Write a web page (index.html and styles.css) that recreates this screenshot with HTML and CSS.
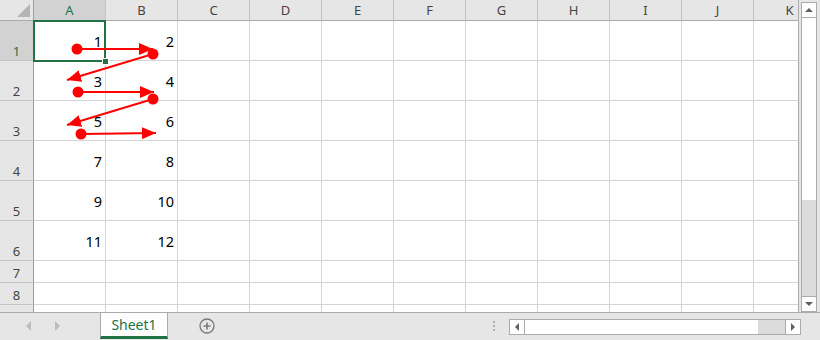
FILE: index.html
```html
<!DOCTYPE html>
<html lang="en">
<head>
    <meta charset="UTF-8">
    <title>Book1 - Sheet1</title>
    <link rel="stylesheet" href="styles.css">
</head>
<body>
    <div class="app">
        <div class="main">
            <div class="sheet">
                <div class="grid">
                    <div class="corner"><span class="tri"></span></div>
                    <div class="col-head sel">A</div><div class="col-head">B</div><div class="col-head">C</div><div class="col-head">D</div><div class="col-head">E</div><div class="col-head">F</div><div class="col-head">G</div><div class="col-head">H</div><div class="col-head">I</div><div class="col-head">J</div><div class="col-head">K</div>

                    <div class="row-head sel">1</div><div class="cell">1</div><div class="cell">2</div><div class="cell"></div><div class="cell"></div><div class="cell"></div><div class="cell"></div><div class="cell"></div><div class="cell"></div><div class="cell"></div><div class="cell"></div><div class="cell"></div>
                    <div class="row-head">2</div><div class="cell">3</div><div class="cell">4</div><div class="cell"></div><div class="cell"></div><div class="cell"></div><div class="cell"></div><div class="cell"></div><div class="cell"></div><div class="cell"></div><div class="cell"></div><div class="cell"></div>
                    <div class="row-head">3</div><div class="cell">5</div><div class="cell">6</div><div class="cell"></div><div class="cell"></div><div class="cell"></div><div class="cell"></div><div class="cell"></div><div class="cell"></div><div class="cell"></div><div class="cell"></div><div class="cell"></div>
                    <div class="row-head">4</div><div class="cell">7</div><div class="cell">8</div><div class="cell"></div><div class="cell"></div><div class="cell"></div><div class="cell"></div><div class="cell"></div><div class="cell"></div><div class="cell"></div><div class="cell"></div><div class="cell"></div>
                    <div class="row-head">5</div><div class="cell">9</div><div class="cell">10</div><div class="cell"></div><div class="cell"></div><div class="cell"></div><div class="cell"></div><div class="cell"></div><div class="cell"></div><div class="cell"></div><div class="cell"></div><div class="cell"></div>
                    <div class="row-head">6</div><div class="cell">11</div><div class="cell">12</div><div class="cell"></div><div class="cell"></div><div class="cell"></div><div class="cell"></div><div class="cell"></div><div class="cell"></div><div class="cell"></div><div class="cell"></div><div class="cell"></div>
                    <div class="row-head">7</div><div class="cell"></div><div class="cell"></div><div class="cell"></div><div class="cell"></div><div class="cell"></div><div class="cell"></div><div class="cell"></div><div class="cell"></div><div class="cell"></div><div class="cell"></div><div class="cell"></div>
                    <div class="row-head">8</div><div class="cell"></div><div class="cell"></div><div class="cell"></div><div class="cell"></div><div class="cell"></div><div class="cell"></div><div class="cell"></div><div class="cell"></div><div class="cell"></div><div class="cell"></div><div class="cell"></div>
                    <div class="row-head"></div><div class="cell"></div><div class="cell"></div><div class="cell"></div><div class="cell"></div><div class="cell"></div><div class="cell"></div><div class="cell"></div><div class="cell"></div><div class="cell"></div><div class="cell"></div><div class="cell"></div>
                </div>

                <!-- active cell A1 -->
                <div class="selection"><span class="handle"></span></div>

                <!-- drawn arrows lie over the cells -->
                <svg class="arrows" width="799" height="312" viewBox="0 0 799 312">
                    <defs>
                        <marker id="head" viewBox="0 0 14 12" refX="14" refY="6" markerWidth="14" markerHeight="12" markerUnits="userSpaceOnUse" orient="auto">
                            <path d="M0,0 L14,6 L0,12 Z" fill="#ff0000"/>
                        </marker>
                    </defs>
                    <g stroke="#ff0000" stroke-width="2" marker-end="url(#head)">
                        <line x1="77" y1="49" x2="153" y2="49"/>
                        <line x1="153" y1="54" x2="67" y2="80"/>
                        <line x1="78" y1="92" x2="154" y2="92"/>
                        <line x1="153" y1="99" x2="67" y2="125"/>
                        <line x1="81" y1="134" x2="156" y2="133"/>
                    </g>
                    <g fill="#ff0000">
                        <circle cx="77" cy="49" r="5.5"/>
                        <circle cx="153" cy="54" r="5.5"/>
                        <circle cx="78" cy="92" r="5.5"/>
                        <circle cx="153" cy="99" r="5.5"/>
                        <circle cx="81" cy="134" r="5.5"/>
                    </g>
                </svg>
            </div>

            <div class="vscroll">
                <div class="sb-btn"><span class="arr up"></span></div>
                <div class="sb-thumb"></div>
                <div class="sb-track"></div>
                <div class="sb-btn"><span class="arr down"></span></div>
            </div>
        </div>

        <div class="tabbar">
            <div class="nav">
                <span class="nav-arr left"></span>
                <span class="nav-arr right"></span>
            </div>
            <div class="tab">Sheet1</div>
            <div class="add">
                <svg width="16" height="16" viewBox="0 0 16 16">
                    <circle cx="8" cy="8" r="7" fill="none" stroke="#7a7a7a" stroke-width="1.3"/>
                    <path d="M8 4.5 V11.5 M4.5 8 H11.5" stroke="#7a7a7a" stroke-width="1.6"/>
                </svg>
            </div>
            <div class="spacer"></div>
            <div class="dots"><span></span><span></span><span></span></div>
            <div class="hscroll">
                <div class="hs-btn"><span class="arr left"></span></div>
                <div class="hs-thumb"></div>
                <div class="hs-track"></div>
                <div class="hs-btn"><span class="arr right"></span></div>
            </div>
        </div>
    </div>
</body>
</html>
```

FILE: styles.css
```css
body {
    margin: 0;
    font-family: 'Noto Sans', sans-serif;
    background: #e6e6e6;
}

.app {
    width: 820px;
    height: 340px;
    display: flex;
    flex-direction: column;
    background: #e6e6e6;
    overflow: hidden;
}

.main {
    display: flex;
    height: 312px;
}

.sheet {
    position: relative;
    width: 799px;
    height: 312px;
    overflow: hidden;
    background: white;
    border-right: 1px solid #ababab;
    box-sizing: border-box;
}

.grid {
    display: grid;
    grid-template-columns: 34px repeat(11, 72px);
    grid-template-rows: 21px repeat(6, 40px) 22px 22px 22px;
}

.corner {
    background: #e6e6e6;
    border-right: 1px solid #9e9e9e;
    border-bottom: 1px solid #ababab;
    box-sizing: border-box;
    display: flex;
    align-items: flex-end;
    justify-content: flex-end;
    padding: 0 3px 3px 0;
}

.tri {
    width: 0;
    height: 0;
    border-left: 13px solid transparent;
    border-bottom: 13px solid #b4b4b4;
}

.col-head {
    background: #e6e6e6;
    border-right: 1px solid #c4c4c4;
    border-bottom: 1px solid #ababab;
    box-sizing: border-box;
    display: flex;
    align-items: center;
    justify-content: center;
    font-size: 13px;
    color: #444;
}

.row-head {
    background: #e6e6e6;
    border-right: 1px solid #9e9e9e;
    border-bottom: 1px solid #c4c4c4;
    box-sizing: border-box;
    display: flex;
    align-items: flex-end;
    justify-content: center;
    font-size: 13px;
    line-height: 18px;
    color: #444;
}

.col-head.sel, .row-head.sel {
    background: #d2d2d2;
    color: #217346;
}

.cell {
    border-right: 1px solid #d4d4d4;
    border-bottom: 1px solid #d4d4d4;
    box-sizing: border-box;
    display: flex;
    align-items: center;
    justify-content: flex-end;
    padding-right: 3px;
    font-size: 14.5px;
    color: #000;
}

.selection {
    position: absolute;
    left: 33px;
    top: 20px;
    width: 73px;
    height: 42px;
    border: 2px solid #217346;
    box-sizing: border-box;
}

.handle {
    position: absolute;
    right: -5px;
    bottom: -5px;
    width: 5px;
    height: 5px;
    background: #217346;
    border: 1px solid white;
}

.arrows {
    position: absolute;
    left: 0;
    top: 0;
    pointer-events: none;
}

.vscroll {
    width: 16px;
    margin: 2px 3px 0 2px;
    display: flex;
    flex-direction: column;
    border-left: 1px solid #ababab;
    border-right: 1px solid #ababab;
    box-sizing: border-box;
    background: white;
}

.sb-btn {
    height: 14px;
    background: white;
    border-top: 1px solid #ababab;
    border-bottom: 1px solid #ababab;
    display: flex;
    align-items: center;
    justify-content: center;
}

.sb-thumb {
    height: 182px;
    background: white;
}

.sb-track {
    flex: 1;
    background: #dbdbdb;
}

.arr {
    width: 0;
    height: 0;
}

.arr.up {
    border-left: 4px solid transparent;
    border-right: 4px solid transparent;
    border-bottom: 4px solid #606060;
}

.arr.down {
    border-left: 4px solid transparent;
    border-right: 4px solid transparent;
    border-top: 4px solid #606060;
}

.arr.left {
    border-top: 4px solid transparent;
    border-bottom: 4px solid transparent;
    border-right: 4px solid #606060;
}

.arr.right {
    border-top: 4px solid transparent;
    border-bottom: 4px solid transparent;
    border-left: 4px solid #606060;
}

.tabbar {
    flex: 1;
    display: flex;
    align-items: flex-start;
    border-top: 1px solid #ababab;
}

.nav {
    width: 100px;
    height: 26px;
    display: flex;
    align-items: center;
    gap: 24px;
    padding-left: 26px;
    box-sizing: border-box;
}

.nav-arr {
    width: 0;
    height: 0;
    border-top: 5px solid transparent;
    border-bottom: 5px solid transparent;
}

.nav-arr.left {
    border-right: 5px solid #bdbdbd;
}

.nav-arr.right {
    border-left: 5px solid #bdbdbd;
}

.tab {
    width: 66px;
    height: 23px;
    background: white;
    border-left: 1px solid #ababab;
    border-right: 1px solid #ababab;
    border-bottom: 3px solid #217346;
    box-sizing: content-box;
    display: flex;
    align-items: center;
    justify-content: center;
    font-size: 14px;
    color: #217346;
}

.add {
    width: 80px;
    height: 26px;
    display: flex;
    align-items: center;
    padding-left: 31px;
    box-sizing: border-box;
}

.spacer {
    flex: 1;
}

.dots {
    width: 16px;
    height: 26px;
    display: flex;
    flex-direction: column;
    justify-content: center;
    align-items: flex-start;
    gap: 2px;
}

.dots span {
    width: 2px;
    height: 2px;
    background: #b0b0b0;
}

.hscroll {
    width: 292px;
    height: 16px;
    margin: 6px 19px 0 0;
    display: flex;
    border-top: 1px solid #ababab;
    border-bottom: 1px solid #ababab;
    box-sizing: border-box;
    background: white;
}

.hs-btn {
    width: 16px;
    border-left: 1px solid #ababab;
    border-right: 1px solid #ababab;
    box-sizing: border-box;
    display: flex;
    align-items: center;
    justify-content: center;
}

.hs-thumb {
    width: 233px;
}

.hs-track {
    flex: 1;
    background: #dbdbdb;
}
```
